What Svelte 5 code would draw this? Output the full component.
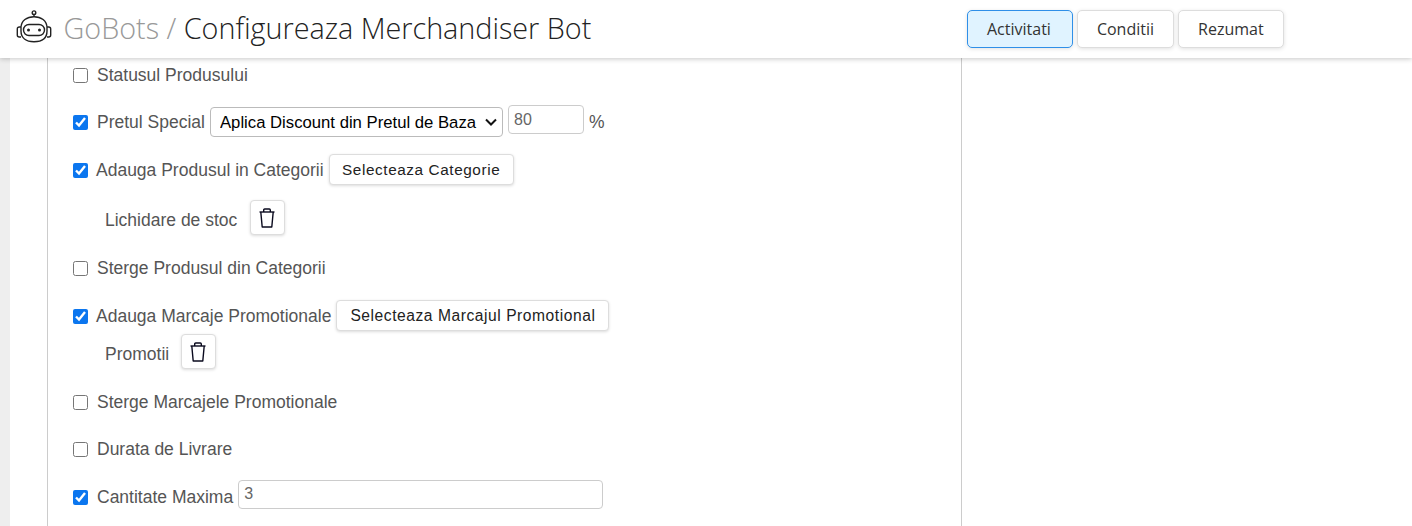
<script>
  let discount = $state('80');
  let maxQty = $state('3');
  const tabs = ['Activitati', 'Conditii', 'Rezumat'];
  let activeTab = $state('Activitati');
</script>

{#snippet trash()}
  <button class="icon-btn" aria-label="Sterge">
    <svg viewBox="0 0 16 20" width="16" height="20" fill="none" stroke="#0a0a1e" stroke-width="1.4" stroke-linejoin="round">
      <path d="M.5 4h15" />
      <path d="M4.700 4V2q0-1 1-1h4.600q1 0 1 1v2" />
      <path d="M1.800 4l1.400 15h9.600l1.400-15" />
    </svg>
  </button>
{/snippet}

<div class="page">
  <header class="topbar">
    <div class="brand">
      <svg class="logo" viewBox="0 0 36 34" width="36" height="34" fill="none" stroke="#222" stroke-width="1.4">
        <circle cx="18" cy="2.700" r="1.800" />
        <path d="M18 4.500V6.700" />
        <path d="M5 18C5 10.500 11 6.700 18 6.700S31 10.500 31 18v3c0 7-5 10.700-13 10.700S5 28 5 21z" />
        <rect x="7.500" y="14.500" width="21" height="11" rx="5.500" />
        <path d="M5 17H3.300q-2 0-2 2v6q0 2 2 2H5M31 17h1.700q2 0 2 2v6q0 2-2 2H31" />
        <circle cx="12.500" cy="20" r="1.500" fill="#222" stroke="none" />
        <circle cx="23.500" cy="20" r="1.500" fill="#222" stroke="none" />
      </svg>
      <h1><span class="muted">GoBots /</span> Configureaza Merchandiser Bot</h1>
    </div>
    <nav class="tabs">
      {#each tabs as tab}
        <button class="tab" class:on={activeTab === tab} onclick={() => (activeTab = tab)}>{tab}</button>
      {/each}
    </nav>
  </header>

  <main class="content">
    <section class="panel">
      <div class="row r-status">
        <input type="checkbox" />
        <label for="">Statusul Produsului</label>
      </div>

      <div class="row r-price">
        <input type="checkbox" checked />
        <label for="">Pretul Special</label>
        <select class="select">
          <option>Aplica Discount din Pretul de Baza</option>
        </select>
        <input class="text-input small" type="text" bind:value={discount} />
        <span class="unit">%</span>
      </div>

      <div class="row r-cat tight">
        <input type="checkbox" checked />
        <label for="">Adauga Produsul in Categorii</label>
        <button class="btn">Selecteaza Categorie</button>
      </div>

      <div class="sub r-stock">
        <span>Lichidare de stoc</span>
        {@render trash()}
      </div>

      <div class="row r-delcat">
        <input type="checkbox" />
        <label for="">Sterge Produsul din Categorii</label>
      </div>

      <div class="row r-promo tight">
        <input type="checkbox" checked />
        <label for="">Adauga Marcaje Promotionale</label>
        <button class="btn">Selecteaza Marcajul Promotional</button>
      </div>

      <div class="sub r-promos">
        <span>Promotii</span>
        {@render trash()}
      </div>

      <div class="row r-delpromo">
        <input type="checkbox" />
        <label for="">Sterge Marcajele Promotionale</label>
      </div>

      <div class="row r-delivery">
        <input type="checkbox" />
        <label for="">Durata de Livrare</label>
      </div>

      <div class="row r-max">
        <input type="checkbox" checked />
        <label for="">Cantitate Maxima</label>
        <input class="text-input wide" type="text" bind:value={maxQty} />
      </div>
    </section>
  </main>
</div>

<style>
  :global(body) {
    margin: 0;
    background: #fff;
    overflow: hidden;
  }

  .page {
    height: 526px;
    display: flex;
    flex-direction: column;
    overflow: hidden;
    font-family: 'Liberation Sans', Arial, sans-serif;
    font-size: 17.5px;
    color: #555;
  }

  .topbar {
    flex: 0 0 58px;
    display: flex;
    align-items: center;
    background: #fff;
    box-shadow: 0 1px 5px rgba(0, 0, 0, 0.22);
    position: relative;
    z-index: 1;
  }

  .brand {
    display: flex;
    align-items: center;
    width: 967px;
    padding-left: 16px;
    box-sizing: border-box;
  }

  .logo {
    margin: -4px 11.500px 0 0;
  }

  h1 {
    margin: 0 0 3px;
    font-family: 'Open Sans', sans-serif;
    font-weight: 300;
    font-size: 28.75px;
    color: #222;
    white-space: nowrap;
  }

  .muted {
    color: #999;
  }

  .tabs {
    display: flex;
    gap: 4px;
  }

  .tab {
    height: 38px;
    padding: 0 19px;
    background: #fff;
    border: 1px solid #ddd;
    border-radius: 5px;
    box-shadow: 0 1px 4px rgba(0, 0, 0, 0.12);
    font-family: 'Open Sans', sans-serif;
    font-size: 16px;
    color: #333;
    cursor: pointer;
  }

  .tab.on {
    padding: 0 21px 0 19px;
    background: #e0f3ff;
    border-color: #2f8fe8;
  }

  .content {
    flex: 1;
    margin-left: 10px;
    padding-left: 37px;
    background: #fff;
    box-shadow: -10px 0 0 #eee;
    min-height: 0;
  }

  .panel {
    width: 915px;
    height: 100%;
    box-sizing: border-box;
    border-left: 1px solid #ccc;
    border-right: 1px solid #ccc;
    padding-left: 25px;
    display: flex;
    flex-direction: column;
  }

  .row {
    display: flex;
    align-items: center;
    height: 32px;
    white-space: nowrap;
  }

  .row input[type='checkbox'] {
    width: 15px;
    height: 15px;
    margin: 0 9px 0 0;
    accent-color: #0b76ef;
    flex: none;
  }

  .row.tight input[type='checkbox'] {
    margin-right: 8px;
  }

  .r-status { margin-top: 1px; }
  .r-price { margin-top: 15px; }
  .r-cat { margin-top: 16px; }
  .r-delcat { margin-top: 17px; }
  .r-promo { margin-top: 16px; }
  .r-delpromo { margin-top: 17px; }
  .r-delivery { margin-top: 15px; }
  .r-max { margin-top: 16px; }

  .select {
    appearance: none;
    margin-left: 5px;
    width: 293px;
    height: 30px;
    padding: 0 5px 0 9px;
    background: #fff url("data:image/svg+xml,%3Csvg xmlns='http://www.w3.org/2000/svg' viewBox='0 0 12 8'%3E%3Cpath d='M1 1.500l5 5 5-5' fill='none' stroke='%23111' stroke-width='2'/%3E%3C/svg%3E") no-repeat right 5px center / 12px 8px;
    border: 1px solid #bbb;
    border-radius: 4px;
    font-family: inherit;
    font-size: 16.7px;
    color: #000;
  }

  .text-input {
    box-sizing: border-box;
    height: 29px;
    padding: 0 5px;
    margin-left: 5px;
    border: 1px solid #ccc;
    border-radius: 4px;
    font-family: inherit;
    font-size: 16px;
    color: #666;
    outline: none;
  }

  .text-input.small {
    width: 76px;
    margin-top: -5px;
  }

  .text-input.wide {
    width: 365px;
    margin-top: -6px;
  }

  .unit {
    margin-left: 5px;
  }

  .btn {
    height: 31px;
    margin: 0 0 2px 5px;
    padding: 2px 13px 0;
    background: #fff;
    border: 1px solid #ddd;
    border-radius: 4px;
    box-shadow: 0 1px 3px rgba(0, 0, 0, 0.14);
    font-family: inherit;
    font-size: 15.6px;
    letter-spacing: 0.55px;
    color: #222;
    cursor: pointer;
  }

  .r-cat .btn {
    width: 185px;
    padding: 2px 0 0;
    font-size: 15.3px;
    letter-spacing: 0.6px;
  }

  .sub {
    display: flex;
    align-items: center;
    height: 35px;
    margin-left: 32px;
    gap: 12px;
  }

  .sub span {
    padding-top: 5px;
  }

  .r-stock { margin-top: 14px; gap: 13px; }
  .r-promos { margin-top: 2px; }

  .icon-btn {
    width: 35px;
    height: 35px;
    display: flex;
    align-items: center;
    justify-content: center;
    padding: 0 1px 0 0;
    background: #fff;
    border: 1px solid #ddd;
    border-radius: 4px;
    box-shadow: 0 1px 3px rgba(0, 0, 0, 0.14);
    cursor: pointer;
  }
</style>
